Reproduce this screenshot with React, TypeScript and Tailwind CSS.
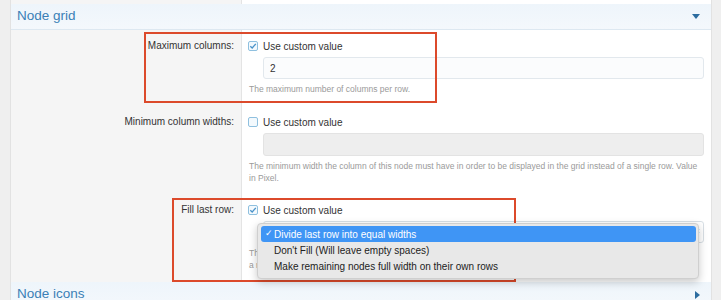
import { useState } from "react";

const font = { fontFamily: '"Liberation Sans", Arial, sans-serif' };

function Check({ checked }: { checked: boolean }) {
  return (
    <span className="flex h-[10px] w-[10px] shrink-0 items-center justify-center rounded-[2px] border border-[#8fc0df] bg-[#f3f9fd]">
      {checked && (
        <svg width="8" height="8" viewBox="0 0 8 8">
          <path d="M1.3 4.2 L3.2 6 L6.8 1.8" fill="none" stroke="#4a93c9" strokeWidth="1.3" />
        </svg>
      )}
    </span>
  );
}

function SectionHeader({ title, open }: { title: string; open: boolean }) {
  return (
    <div className="flex h-[26px] shrink-0 items-center justify-between border-b border-[#dde8f1] bg-gradient-to-b from-[#eef5fb] to-[#f4f8fc] pl-[6px] pr-[11px]">
      <span className="text-[13.5px] text-[#3b80b6]">{title}</span>
      {open ? (
        <svg width="8" height="5" viewBox="0 0 8 5">
          <path d="M0 0 H8 L4 5 Z" fill="#2c6c9f" />
        </svg>
      ) : (
        <svg width="5" height="8" viewBox="0 0 5 8">
          <path d="M0 0 V8 L5 4 Z" fill="#2c6c9f" />
        </svg>
      )}
    </div>
  );
}

function Row({
  label,
  checked,
  pb,
  children,
  hint,
}: {
  label: string;
  checked: boolean;
  pb: string;
  children: React.ReactNode;
  hint: React.ReactNode;
}) {
  return (
    <div className="flex">
      <div className={`w-[231px] shrink-0 border-r border-[#e4e4e4] bg-[#f5f5f5] pr-[7px] pt-[10px] text-right text-[10px] leading-[12px] text-[#333] ${pb}`}>
        {label}
      </div>
      <div className={`min-w-0 flex-1 bg-white pl-[6px] pr-[7px] pt-[10px] ${pb}`}>
        <div className="flex h-[12px] items-center gap-[5px] text-[10px] text-[#333]">
          <Check checked={checked} />
          <span>Use custom value</span>
        </div>
        <div className="relative ml-[15px] mt-[5px]">{children}</div>
        <div className="mt-[4px] whitespace-nowrap pl-[1px] text-[8.5px] leading-[12px] text-[#9a9a9a]">{hint}</div>
      </div>
    </div>
  );
}

const options = [
  "Divide last row into equal widths",
  "Don't Fill (Will leave empty spaces)",
  "Make remaining nodes full width on their own rows",
];

export default function App() {
  const [selected] = useState(0);

  return (
    <div className="flex h-[300px] w-[721px] overflow-hidden bg-[#efefef]" style={font}>
      <div className="w-[11px] shrink-0 border-r border-[#e2e2e2] bg-[#efefef]" />
      <div className="flex w-[700px] shrink-0 flex-col">
        {/* previous row tail */}
        <div className="flex h-[4px] shrink-0">
          <div className="w-[231px] border-r border-[#e4e4e4] bg-[#f5f5f5]" />
          <div className="flex-1 bg-white" />
        </div>

        <SectionHeader title="Node grid" open />

        <div className="relative">
          <Row
            label="Maximum columns:"
            checked
            pb="pb-[11px]"
            hint="The maximum number of columns per row."
          >
            <div className="flex h-[22px] items-center rounded-[3px] border border-[#e2e8ed] bg-[#fbfcfd] pl-[6px] text-[10px] text-[#333]">
              2
            </div>
          </Row>
          <div className="pointer-events-none absolute left-[133px] top-[2px] h-[71px] w-[293px] border-2 border-[#dc4a2b]" />
        </div>

        <Row
          label="Minimum column widths:"
          checked={false}
          pb="pb-[10px]"
          hint={
            <>
              The minimum width the column of this node must have in order to be displayed in the grid instead of a single row. Value
              <br />
              in Pixel.
            </>
          }
        >
          <div className="h-[23px] rounded-[3px] border border-[#e3e3e3] bg-[#eeeeee]" />
        </Row>

        <div className="relative">
          <Row
            label="Fill last row:"
            checked
            pb="pb-[11px]"
            hint={
              <>
                The way the last row is filled when it holds fewer nodes than the grid has columns.
                <br />
                a row of its own.
              </>
            }
          >
            <div className="flex h-[22px] items-center justify-end rounded-[3px] border border-[#d8dfe5] bg-white pr-[2px] text-[8px] text-[#555]">
              ⬍
            </div>
            {/* open select menu */}
            <div className="absolute left-[-6px] top-[2px] z-10 w-[442px] rounded-[4px] border border-[#cfcfcf] bg-[#e8e8e8] pb-[4px] pl-[3px] pr-[2px] pt-[2px] text-[10px] shadow-[0_3px_8px_rgba(0,0,0,0.22)]">
              {options.map((o, i) => (
                <div
                  key={o}
                  className={`flex h-[16px] items-center rounded-[3px] ${
                    i === selected ? "bg-[#3f95f5] text-white" : "text-[#222]"
                  }`}
                >
                  <span className="w-[13px] pl-[4px] text-[9px]">{i === selected ? "✓" : ""}</span>
                  <span>{o}</span>
                </div>
              ))}
            </div>
          </Row>
          <div className="pointer-events-none absolute left-[161px] top-[4px] h-[84px] w-[344px] border-2 border-[#dc4a2b]" />
        </div>

        <SectionHeader title="Node icons" open={false} />
      </div>
      <div className="w-[10px] shrink-0 border-l border-[#e2e2e2] bg-[#efefef]" />
    </div>
  );
}
